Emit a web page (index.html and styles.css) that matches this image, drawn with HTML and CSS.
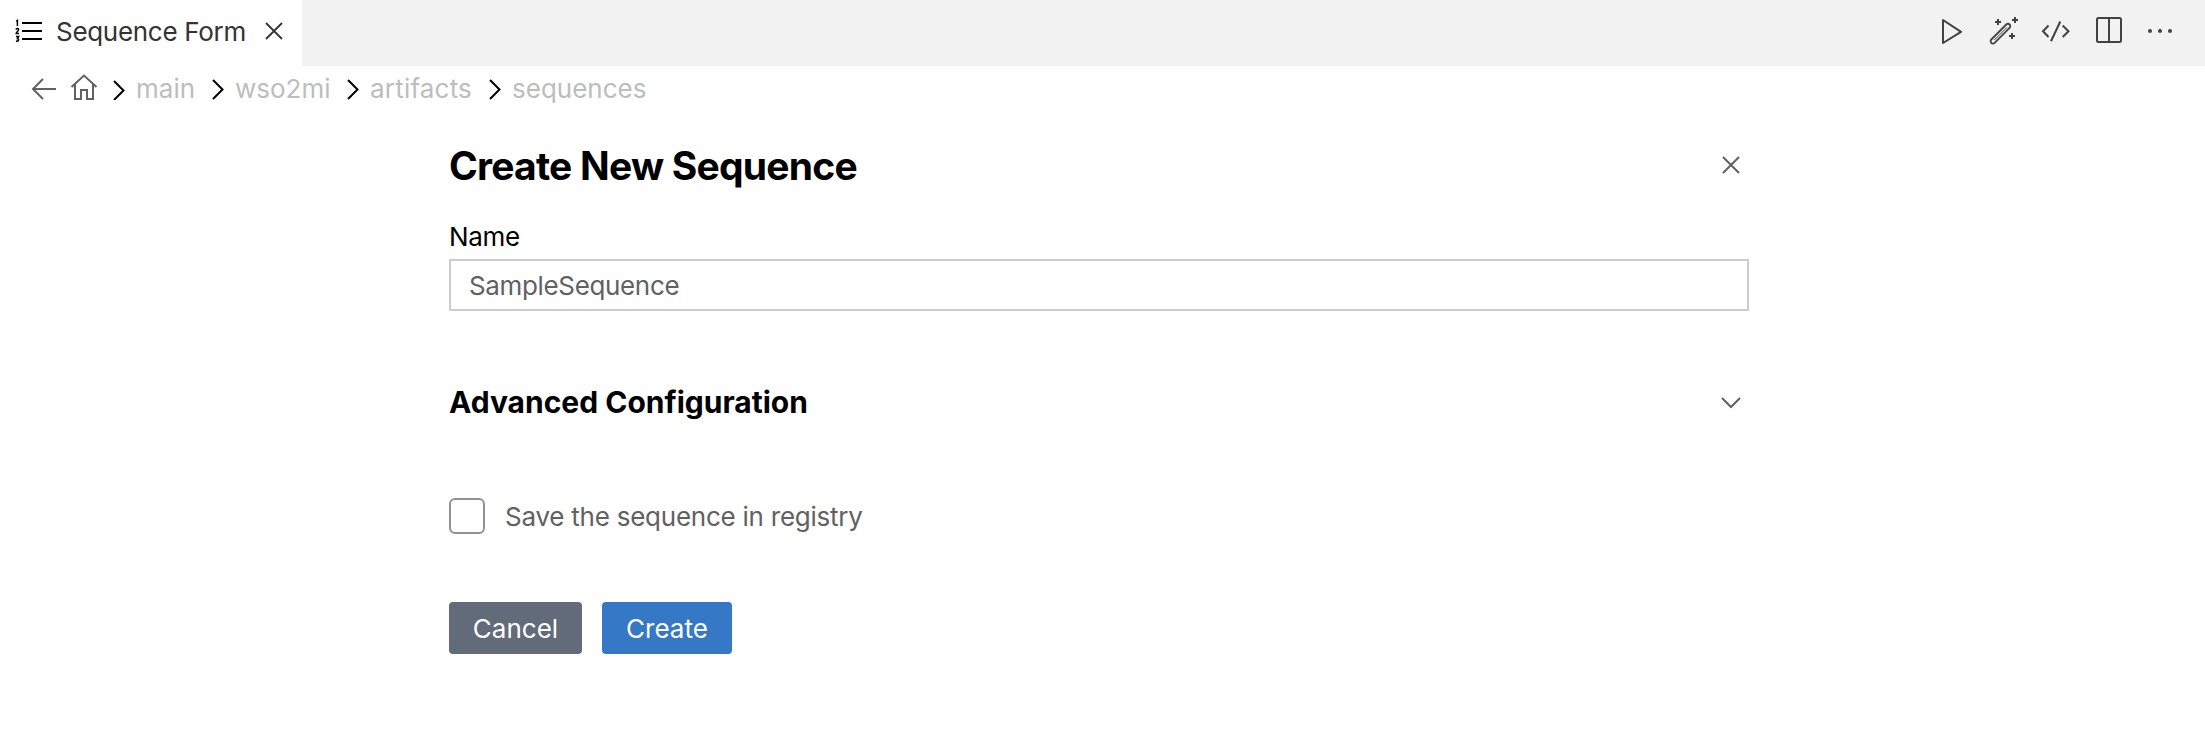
FILE: index.html
```html
<!DOCTYPE html>
<html lang="en">
<head>
<meta charset="utf-8">
<title>Sequence Form</title>
<link rel="stylesheet" href="styles.css">
</head>
<body>
<header class="tabbar">
  <div class="tab">
    <svg class="icon list-icon" width="28" height="26" viewBox="0 0 28 26"><path d="M7 5H27M7 13H27M7 21H27" stroke="#000" stroke-width="2"/><path d="M1.2 3.3L2.4 2.4V8M1 11.6C1.2 10 3.8 10.2 3.6 11.8C3.5 12.8 1.3 14 1.2 15.6H4M1 18.6H3.6L2.4 20.6C4.4 20.8 3.8 23.6 1 23.1" fill="none" stroke="#000" stroke-width="1.5"/></svg>
    <span class="tab-title">Sequence Form</span>
    <svg class="icon tab-close" width="18" height="18" viewBox="0 0 18 18"><path d="M1 1L17 17M17 1L1 17" stroke="#333" stroke-width="1.8"/></svg>
  </div>
  <div class="actions">
    <svg class="icon" width="285" height="66" viewBox="0 0 285 66" fill="none" stroke="#424242" stroke-width="2" stroke-linejoin="round">
      <path d="M23 20V43L41 31.8Z"/>
      <path d="M71.3 39.5L86.3 24.5A2.3 2.3 0 0 1 89.6 27.8L74.6 42.8A2.3 2.3 0 0 1 71.3 39.5Z" stroke-width="1.8"/>
      <path d="M74.3 40L87 27.3" stroke-width="1"/>
      <path d="M75 22H81M78 19V25M92 20H98M95 17V23M89 36H95M92 33V39"/>
      <path d="M128.5 25.5L123 31.3L128.5 37M142.7 25.5L148.5 31.3L142.7 37M140.3 21.5L131 41.3" stroke-linejoin="miter"/>
      <rect x="177" y="18" width="24" height="24" rx="1.5"/><path d="M189 18V42"/>
      <g fill="#424242" stroke="none"><circle cx="230" cy="31" r="2"/><circle cx="240" cy="31" r="2"/><circle cx="250" cy="31" r="2"/></g>
    </svg>
  </div>
</header>
<nav class="crumbs">
  <svg class="icon back" width="26" height="22" viewBox="0 0 26 22" fill="none" stroke="#616161" stroke-width="2"><path d="M12 1L2 11L12 21M2 11H25"/></svg>
  <svg class="icon home" width="28" height="28" viewBox="0 0 28 28" fill="none" stroke="#616161" stroke-width="2"><path d="M1.5 14L14 2.5L26.5 14M5 11V26H11V17H17V26H23V11"/></svg>
  <svg class="icon chev" width="12" height="22" viewBox="0 0 12 22"><path d="M1 3L10.5 12.5L1 22" fill="none" stroke="#000" stroke-width="2"/></svg>
  <span class="crumb w1">main</span>
  <svg class="icon chev" width="12" height="22" viewBox="0 0 12 22"><path d="M1 2L10.5 11.5L1 21" fill="none" stroke="#000" stroke-width="2"/></svg>
  <span class="crumb w2">wso2mi</span>
  <svg class="icon chev" width="12" height="22" viewBox="0 0 12 22"><path d="M1 2L10.5 11.5L1 21" fill="none" stroke="#000" stroke-width="2"/></svg>
  <span class="crumb w3">artifacts</span>
  <svg class="icon chev" width="12" height="22" viewBox="0 0 12 22"><path d="M1 2L10.5 11.5L1 21" fill="none" stroke="#000" stroke-width="2"/></svg>
  <span class="crumb w4">sequences</span>
</nav>
<main class="form">
  <div class="row title-row">
    <h1 class="title">Create New Sequence</h1>
    <svg class="icon close" width="18" height="18" viewBox="0 0 18 18"><path d="M1 1L17 17M17 1L1 17" stroke="#616161" stroke-width="2"/></svg>
  </div>
  <label class="label" for="name">Name</label>
  <input class="field" id="name" type="text" value="SampleSequence">
  <div class="row advanced-row">
    <h2 class="advanced">Advanced Configuration</h2>
    <svg class="icon expand" width="20" height="12" viewBox="0 0 20 12"><path d="M1 1L10 10L19 1" fill="none" stroke="#616161" stroke-width="2"/></svg>
  </div>
  <div class="check-row">
    <span class="checkbox" role="checkbox" aria-checked="false"></span>
    <span class="check-label">Save the sequence in registry</span>
  </div>
  <div class="buttons">
    <button class="btn cancel">Cancel</button>
    <button class="btn create">Create</button>
  </div>
</main>
</body>
</html>
```
FILE: styles.css
```css
* { box-sizing: border-box; }
body {
  margin: 0;
  background: #fff;
  font-family: Inter, "Liberation Sans", sans-serif;
  font-size: 26px;
  color: #000;
}
.icon { display: block; flex: none; }
.tabbar {
  display: flex;
  justify-content: space-between;
  height: 66px;
  background: #f2f2f2;
}
.tab {
  display: flex;
  align-items: center;
  width: 302px;
  padding: 0 0 4px 15px;
  background: #fff;
  white-space: nowrap;
}
.list-icon { margin-right: 13px; }
.tab-title {
  width: 209px;
  padding-top: 2px;
  color: #333;
  line-height: 32px;
  letter-spacing: -0.3px;
}
.crumbs {
  display: flex;
  align-items: center;
  height: 45px;
  padding-left: 31px;
  color: #bdbdbd;
  white-space: nowrap;
}
.home { margin: 0 15px 3px 13px; }
.chev { margin-right: 11px; }
.crumb { line-height: 32px; }
.w1 { width: 76px; }
.w2 { width: 112px; }
.w3 { width: 119px; letter-spacing: 0.2px; }
.form {
  display: flex;
  flex-direction: column;
  width: 1300px;
  margin-left: 449px;
  padding-top: 30px;
}
.row {
  display: flex;
  align-items: center;
  justify-content: space-between;
  padding-right: 9px;
}
.title-row { height: 50px; }
.title {
  margin: 0;
  font-size: 39px;
  line-height: 50px;
  font-weight: 700;
  letter-spacing: -0.77px;
}
.close { margin-bottom: 2px; }
.label {
  margin-top: 30px;
  line-height: 32px;
  height: 38px;
  letter-spacing: -0.3px;
}
.field {
  width: 100%;
  height: 52px;
  padding: 0 18px;
  border: 2px solid #ccc;
  border-radius: 0;
  background: #fff;
  color: #616161;
  font: inherit;
  letter-spacing: -0.35px;
  outline: none;
}
.advanced-row {
  height: 40px;
  margin-top: 72px;
}
.advanced {
  margin: 0;
  padding-bottom: 2px;
  font-size: 30px;
  font-weight: 700;
  line-height: 40px;
  letter-spacing: 0;
}
.expand { margin-right: -1px; }
.check-row {
  display: flex;
  align-items: center;
  gap: 20px;
  height: 36px;
  margin-top: 75px;
}
.checkbox {
  width: 36px;
  height: 36px;
  border: 2px solid #919191;
  border-radius: 6px;
}
.check-label { color: #616161; letter-spacing: -0.24px; }
.buttons {
  display: flex;
  gap: 20px;
  margin-top: 68px;
}
.btn {
  width: 133px;
  height: 52px;
  padding: 0;
  border: 0;
  border-radius: 4px;
  color: #fff;
  font: inherit;
}
.cancel { background: #616b7a; }
.create { width: 130px; background: #3478c6; }
```
